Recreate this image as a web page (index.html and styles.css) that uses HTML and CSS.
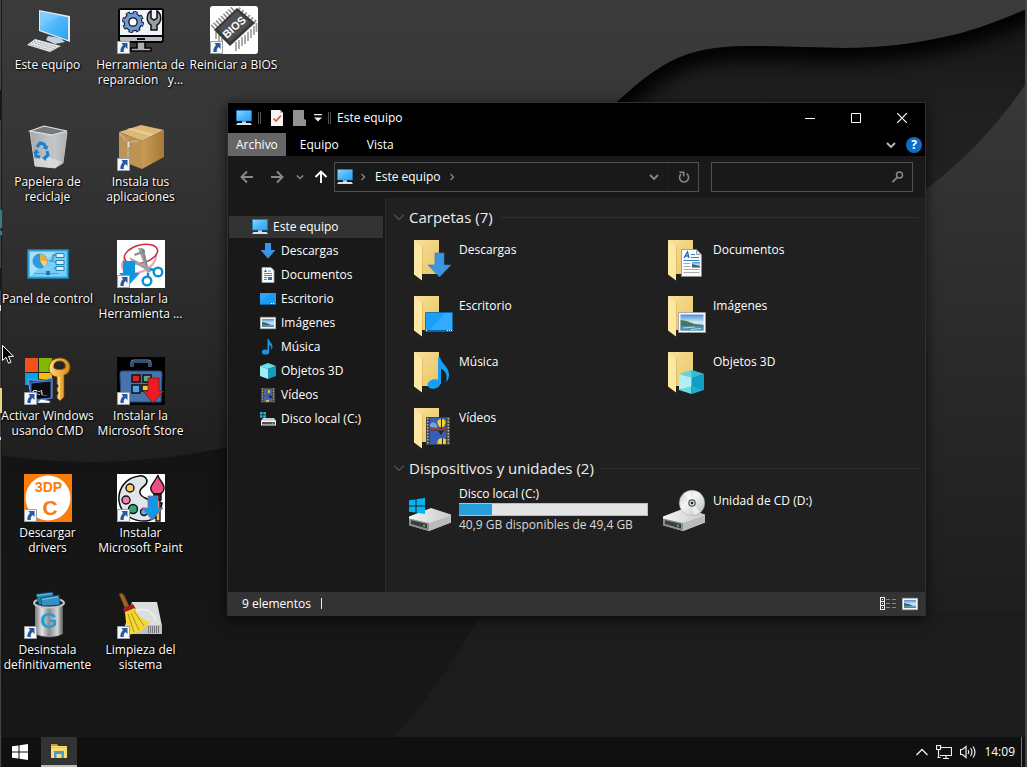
FILE: index.html
```html
<!DOCTYPE html>
<html lang="es">
<head>
<meta charset="utf-8">
<title>Escritorio</title>
<link rel="stylesheet" href="styles.css">
</head>
<body>
<svg class="sprite" aria-hidden="true">
  <defs>
    <linearGradient id="g-screen" x1="0" y1="0" x2="1" y2="1"><stop offset="0" stop-color="#8fd6ff"/><stop offset=".5" stop-color="#4db8fb"/><stop offset="1" stop-color="#2ba2f2"/></linearGradient>
    <linearGradient id="g-folder" x1="0" y1="0" x2="1" y2="1"><stop offset="0" stop-color="#f9e19a"/><stop offset="1" stop-color="#e8c464"/></linearGradient>
    <linearGradient id="g-flap" x1="0" y1="0" x2="0" y2="1"><stop offset="0" stop-color="#fbe6a6"/><stop offset="1" stop-color="#ffe9a0"/></linearGradient>
    <linearGradient id="g-bin" x1="0" x2="1"><stop offset="0" stop-color="#a4a7aa"/><stop offset=".55" stop-color="#c3c6c8"/><stop offset="1" stop-color="#85888b"/></linearGradient>
    <linearGradient id="g-metal" x1="0" x2="1"><stop offset="0" stop-color="#77797b"/><stop offset=".25" stop-color="#e2e3e4"/><stop offset=".5" stop-color="#8a8d90"/><stop offset=".8" stop-color="#d5d6d8"/><stop offset="1" stop-color="#55585a"/></linearGradient>
    <linearGradient id="g-key" x1="0" x2="1"><stop offset="0" stop-color="#ffd97a"/><stop offset="1" stop-color="#d98a12"/></linearGradient>
    <linearGradient id="g-box" x1="0" x2="1"><stop offset="0" stop-color="#c89c58"/><stop offset="1" stop-color="#a87834"/></linearGradient>
    <linearGradient id="g-sky" x1="0" y1="0" x2="0" y2="1"><stop offset="0" stop-color="#4b8fdd"/><stop offset=".5" stop-color="#d5e9f5"/><stop offset="1" stop-color="#6aa0bd"/></linearGradient>
    <linearGradient id="g-drive" x1="0" x2="1"><stop offset="0" stop-color="#f4f4f4"/><stop offset="1" stop-color="#c9cacc"/></linearGradient>
    <linearGradient id="g-disc" x1="0" y1="0" x2="1" y2="1"><stop offset="0" stop-color="#c9cccd"/><stop offset=".4" stop-color="#f4f6f6"/><stop offset=".6" stop-color="#dfe3e4"/><stop offset="1" stop-color="#b4b8ba"/></linearGradient>
  </defs>
  <symbol id="shortcut" viewBox="0 0 13 13"><path fill="#f4f6f8" stroke="#9aa0a6" d="M.5.5h12v12H.5z"/><path fill="#28599c" d="M4.500 2h6v6L8.500 6C7 7.300 6.500 9 6.800 11H3.500C3 8.500 4 6.300 6 4z"/></symbol>
  <symbol id="pc" viewBox="0 0 16 16"><path fill="url(#g-screen)" stroke="#1583cf" stroke-width=".6" d="M.5.5h15v10.500H.5z"/><path fill="#b9d5e7" d="M6 11.300h4v1.700H6z"/><path fill="#d6e2ea" d="M1.500 13h13l1.500 2H0z"/></symbol>
  <symbol id="chev" viewBox="0 0 10 10"><path fill="none" stroke="currentColor" stroke-width="1.800" d="M1 3l4 4 4-4"/></symbol>
  <symbol id="chev-thin" viewBox="0 0 10 10"><path fill="none" stroke="currentColor" d="M0 2.500l5 5 5-5"/></symbol>
  <symbol id="chev-r" viewBox="0 0 8 8"><path fill="none" stroke="currentColor" stroke-width="1.300" d="M2.500 1l3 3-3 3"/></symbol>
  <symbol id="arrow" viewBox="0 0 14 14"><path fill="none" stroke="currentColor" stroke-width="1.900" d="M13 7H2M7 1.500L1.500 7 7 12.500"/></symbol>
  <symbol id="down" viewBox="0 0 16 16"><path fill="#3a95e6" d="M5 0h6v7h4.500L8 15.500.5 7H5z"/></symbol>
  <symbol id="doc" viewBox="0 0 16 16"><path fill="#fdfdfd" stroke="#a9a9a9" stroke-width=".8" d="M2 .5h9l3 3v12H2z"/><path stroke="#3f84c4" d="M4 6.500h8M8 4h3M4 8.500h8M4 10.500h3M4 12.500h3"/><path fill="#1f73bb" d="M4 5l1.500-3L7 5zM8 10h4v3H8z"/></symbol>
  <symbol id="desk" viewBox="0 0 16 16"><path fill="#1a9bf6" d="M0 2h16v12H0z"/><path fill="#3cb0ff" d="M0 11L12 2H0z" opacity=".5"/><path stroke="#0b62ad" d="M0 13.500h16"/><path stroke="#fff" stroke-dasharray="1 1" d="M11 12.500h4"/></symbol>
  <symbol id="pic" viewBox="0 0 16 16"><path fill="#f5f5f5" stroke="#bbb" stroke-width=".6" d="M.3 2.300h15.400v11.400H.3z"/><path fill="url(#g-sky)" d="M2 4h12v8H2z"/><path fill="#3b6a68" d="M2 7l5 1 4 2-9 .5z"/><path fill="#4f88ae" d="M2 10.500h12V12H2z"/></symbol>
  <symbol id="note" viewBox="0 0 16 16"><ellipse cx="5.500" cy="13" rx="3.700" ry="2.600" fill="#1595ee"/><path fill="#1595ee" d="M7.500 0h1.300c.3 3 3.700 3.800 3.700 7.500 0 1.400-.4 2.600-1.300 3.800.8-3.300-.3-4.600-2-5.300V13H7.500z"/></symbol>
  <symbol id="cube" viewBox="0 0 16 16"><path fill="#6be0e8" d="M8 0l8 3-8 3-8-3z"/><path fill="#9deef2" d="M0 3l8 3v10l-8-3z"/><path fill="#129dbd" d="M16 3L8 6v10l8-3z"/></symbol>
  <symbol id="film" viewBox="0 0 16 16"><path fill="#4c4c4c" d="M1 1h14v14.500H1z"/><path stroke="#c9c9c9" stroke-dasharray="1 1.500" d="M2.500 1.500v13M13.500 1.500v13"/><path fill="#3f66b4" d="M4 2h8v6H4zM4 9h8v6H4z"/><path fill="#a04c50" d="M4 6h4v2H4z"/><path fill="#d8bd3a" d="M8 3h2v3H8zM6 13h3v2H6z"/><path fill="#1f2b44" d="M9 9h3v2H9z"/></symbol>
  <symbol id="winlogo" viewBox="0 0 16 16"><path fill="currentColor" d="M0 2.300l6.500-.9v6.100H0zM7.500 1.200L16 0v7.500H7.500zM0 8.500h6.500v6.100L0 13.700zM7.500 8.500H16V16l-8.500-1.200z"/></symbol>
  <symbol id="drive-s" viewBox="0 0 16 16"><path fill="#25b4ea" d="M0 1h2.500v2.500H0zM3.300 1H6v2.500H3.300zM0 4.300h2.500v2.500H0zM3.300 4.300H6v2.500H3.300z"/><path fill="#ccc" d="M3 7h11l2 3H1z"/><path fill="#f1f1f1" d="M1 9.500h15v5H1z"/><path fill="#515151" d="M2 11h13v2.500H2z"/><path fill="#47cf4e" d="M12 11.700h1.500v1H12z"/></symbol>
  <symbol id="folder" viewBox="0 0 48 48"><path fill="url(#g-folder)" d="M7 4h25v34H7z"/><path fill="url(#g-flap)" d="M7 4l8 6.500V44.500L7 38.500z"/><path fill="#d9b65c" d="M15 10.500h.7V38H15z"/></symbol>
  <symbol id="drive" viewBox="0 0 48 48"><path fill="url(#g-drive)" d="M3 26.500L25 18l20 6.500v8L23 41 3 35z"/><path fill="#8b8d8f" d="M3 28.500l20 4.500v8L3 35.500z"/><path fill="#3b3d3f" d="M5 30.300l16 3.700v4.500L5 34z"/><path fill="#b9bbbd" d="M23 33l22-7.500v7L23 41z"/><path fill="#37d243" d="M17 34.500l2 .5v1.800l-2-.5z"/></symbol>
</svg>

<main class="desktop">
  <svg class="wallpaper" viewBox="0 0 1027 767" preserveAspectRatio="none" aria-hidden="true">
    <defs>
      <linearGradient id="w-base" x1="0" y1="0" x2="0" y2="1"><stop offset="0" stop-color="#3b3b3b"/><stop offset=".2" stop-color="#353535"/><stop offset=".45" stop-color="#282828"/><stop offset=".6" stop-color="#1f1f1f"/></linearGradient>
      <linearGradient id="w-low" x1="0" y1="0" x2="0" y2="1"><stop offset="0" stop-color="#111"/><stop offset=".4" stop-color="#151515"/><stop offset="1" stop-color="#181818"/></linearGradient>
      <linearGradient id="w-right" x1="0" y1="0" x2="0" y2="1"><stop offset="0" stop-color="#141414"/><stop offset=".15" stop-color="#202020"/><stop offset=".5" stop-color="#222"/><stop offset="1" stop-color="#1b1b1b"/></linearGradient>
      <linearGradient id="w-fold" x1="0" y1="0" x2="0" y2="1"><stop offset="0" stop-color="#383838"/><stop offset=".45" stop-color="#282828"/><stop offset=".8" stop-color="#1d1d1d"/></linearGradient>
      <filter id="w-blur"><feGaussianBlur stdDeviation="9"/></filter>
      <clipPath id="w-clip"><path d="M600 118C650 70 675 51 725 47s120 6 180-3S985 26 1027 9v758H560z"/></clipPath>
    </defs>
    <path fill="url(#w-base)" d="M0 0h1027v767H0z"/>
    <path fill="url(#w-low)" d="M0 455Q110 472 228 447L500 330l200 437H0z"/>
    <g clip-path="url(#w-clip)">
      <path fill="url(#w-right)" d="M500 0h527v767H500z"/>
      <path fill="none" stroke="#060606" stroke-width="26" filter="url(#w-blur)" d="M600 118C650 70 675 51 725 47s120 6 180-3S985 26 1040 4"/>
      <path fill="url(#w-fold)" d="M1027 82Q985 145 925 190L700 500v267h327z"/>
    </g>
    <path fill="#1c1c1c" d="M482 612Q440 690 368 767h659V612z"/>
    <path fill="#444" d="M0 0h1v767H0zM1025 0h2v767h-2z"/>
    <path fill="#181818" d="M1 0h1v767H1zM0 90h1v30H0zM0 268h1v22H0z"/>
    <path fill="#347d8b" d="M0 210h2v18H0zM0 231h2v4H0z"/>
    <path fill="#ddd" d="M0 305h1v6H0zM0 437h1v3H0z"/>
    <path fill="#ecd37d" d="M0 388h2v25H0z"/>
  </svg>

  <nav class="shortcuts" aria-label="Iconos del escritorio">
    <button class="shortcut"><svg class="shortcut-icon" viewBox="0 0 48 48"><path fill="#e2eaf0" d="M15 4l31 6v26L15 25z"/><path fill="url(#g-screen)" d="M16 5.500l28 5.700V34L16 24z"/><path fill="#7fcbff" opacity=".5" d="M16 5.500l20 4L16 20z"/><path fill="#c0d5e0" d="M24 30l12 2 5 4-10 2-9-4z"/><path fill="#e6e9eb" d="M11 33l26 7-11 6-23-7z"/><path stroke="#8f989e" stroke-width=".8" stroke-dasharray="2 1" d="M10 35l24 6.500M8 36.500L31 43M5.500 38.500L28 44.500"/></svg><span class="shortcut-label">Este equipo</span></button>
    <button class="shortcut"><svg class="shortcut-icon" viewBox="0 0 48 48"><path fill="#babcc1" stroke="#050505" stroke-width="2" d="M4 3h40q2 0 2 2v29q0 2-2 2H4q-2 0-2-2V5q0-2 2-2z"/><path fill="#f0f3fc" d="M3 4h42v25H3z"/><path stroke="#050505" stroke-width="2" d="M2 30h44"/><path stroke="#111" stroke-width="2" d="M20 33h8"/><circle cx="16" cy="16" r="9" fill="none" stroke="#111" stroke-width="4" stroke-dasharray="4 3.070"/><circle cx="16" cy="16" r="6.500" fill="#fff" stroke="#111" stroke-width="6"/><circle cx="16" cy="16" r="9" fill="none" stroke="#6f98d6" stroke-width="2.400" stroke-dasharray="2.600 4.470" stroke-dashoffset="-.7"/><circle cx="16" cy="16" r="6.600" fill="none" stroke="#6f98d6" stroke-width="3.600"/><path fill="#9a9ca0" stroke="#111" stroke-width="1.500" d="M34 5v7l3 2 3-2V5c5 3 5 11 0 14v5h-6v-5c-5-3-5-11 0-14z"/><path fill="#aeb0b4" stroke="#050505" stroke-width="1.600" d="M20 36h8v6h6v3H14v-3h6z"/><use href="#shortcut" y="35" width="13" height="13"/></svg><span class="shortcut-label">Herramienta de<br>reparacion&nbsp;&nbsp; y...</span></button>
    <button class="shortcut"><svg class="shortcut-icon" viewBox="0 0 48 48"><rect width="48" height="48" rx="3" fill="#fefefe"/><path stroke="#888" stroke-width="7" stroke-dasharray="1.500 1.800" d="M3 22L24 3"/><path stroke="#999" stroke-width="5" stroke-dasharray="2 2" d="M28 3l18 14"/><path stroke="#a5a5a5" stroke-width="1.800" d="M26 36v9M29 34v9M32 31v9M35 29v9M38 26v9M41 23v9M44 20v9M46.500 17v9M6 26v7M9 29v7M12 32v7"/><path fill="#39393b" d="M4 24L27 2l18 15-25 23z"/><path fill="#505052" d="M8 23L27 5l14 12-21 19z"/><text x="24" y="25" class="bios" transform="rotate(-42 24 21)">BIOS</text><use href="#shortcut" y="35" width="13" height="13"/></svg><span class="shortcut-label">Reiniciar a BIOS</span></button>
    <button class="shortcut"><svg class="shortcut-icon" viewBox="0 0 48 48"><path fill="url(#g-bin)" stroke="#d9dadb" stroke-width=".8" d="M6 8l5 35 20 2 8-5 4-31-16 3z"/><path fill="#77797b" stroke="#e3e4e5" stroke-width="1.200" d="M6 8l14-5 23 5-15 4z"/><path fill="#d0d2d3" opacity=".55" d="M28 12l15-3-5 31-8 5z"/><path fill="#e6e7e8" opacity=".6" d="M10 36l14-2 14 5-7 6-20-2z"/><g fill="none" stroke="#1a7fce" stroke-width="3"><path d="M13 24l3-4 4 1 1.500 3M23 28l1 4-3 3M16 34l-4-1-.5-4"/></g><path fill="#1a7fce" d="M18.500 25l6-2.500-1.500 4.500zM22 32v6l-4-3zM9 30l3.500-4 3 4z"/></svg><span class="shortcut-label">Papelera de<br>reciclaje</span></button>
    <button class="shortcut"><svg class="shortcut-icon" viewBox="0 0 48 48"><path fill="#dbb878" d="M2 9l22-7 23 5-22 11z"/><path fill="#be9455" d="M2 9l23 9v28L2 37z"/><path fill="url(#g-box)" d="M25 18L47 7v27L25 46z"/><path fill="#ecd29c" opacity=".8" d="M10 6l3-1 24 6-4 2z"/><path fill="none" stroke="#d8cbb0" stroke-width="1.500" stroke-dasharray="1 1" d="M3 11l8 8 10-1M11 19v23"/><path fill="#ddd" stroke="#777" stroke-width=".6" d="M10 18h3v7h-3z"/><use href="#shortcut" y="35" width="13" height="13"/></svg><span class="shortcut-label">Instala tus<br>aplicaciones</span></button>
    <button class="shortcut"><svg class="shortcut-icon" viewBox="0 0 48 48"><path fill="#5bc3f3" stroke="#1d8dcb" stroke-width="1.500" d="M4 10h40v28H4z"/><path fill="#a4e0fb" d="M6 12h36v24H6z"/><path fill="#64c6f5" d="M7 36l24-24h11v24z" opacity=".7"/><circle cx="16" cy="21" r="7" fill="#cdeefc" stroke="#2c8cc5"/><path fill="#2c99dc" d="M16 21l7 0a7 7 0 1 1-7-7z"/><path fill="#ebac41" d="M16 21v-7a7 7 0 0 1 7 7z"/><path fill="#f5cf82" d="M16 21h7a7 7 0 0 1-3 6z"/><g fill="#d8f1fc" stroke="#267fb5"><path d="M32 13.500h8v4h-8zM32 20.500h8v4h-8zM32 26.500h8v4h-8z"/><path fill="none" d="M25 21h4v-6h3M32 22h-2M32 28h-2"/></g><path stroke="#d27c20" d="M10 33.500h24"/><path fill="#1975b5" d="M22 31h4v4h-4z"/></svg><span class="shortcut-label">Panel de control</span></button>
    <button class="shortcut"><svg class="shortcut-icon" viewBox="0 0 48 48"><path fill="#fff" d="M0 0h48v48H0z"/><ellipse cx="22" cy="21" rx="18" ry="11" fill="none" stroke="#e7a5ac" stroke-width="2" transform="rotate(-25 22 21)"/><ellipse cx="24" cy="14" rx="17" ry="9" fill="#fff" stroke="#cf2e42" stroke-width="1.600" transform="rotate(-15 24 14)"/><path fill="#a0a3a6" d="M21 8l4 0 6 20 3 4-4 1zM12 17l24 12-3 3-18-10z"/><path fill="#85898c" d="M24 8l3 1 4 18-2-1zM17 14l11-4v2l-10 4z"/><g fill="none" stroke="#0d8fd5" stroke-width="2.400"><circle cx="41" cy="32" r="4.300"/><circle cx="30" cy="41" r="4.300"/><path d="M33 29l4 1M31 33v3"/></g><path fill="#1096df" d="M6 21h12v12h5L13 44 2 33h4z"/><use href="#shortcut" y="35" width="13" height="13"/></svg><span class="shortcut-label">Instalar la<br>Herramienta ...</span></button>
    <button class="shortcut"><svg class="shortcut-icon" viewBox="0 0 48 48"><path fill="#f1511b" d="M1 1h13v14H1z"/><path fill="#7fba00" d="M15 1h13v14H15z"/><path fill="#00a3ee" d="M1 16h13v12H1z"/><path fill="#fbbc09" d="M15 16h13v6H15z"/><path fill="#2757a4" stroke="#7ea6de" d="M4 22q12 3 24-1v20L8 45z"/><path fill="#0a0c10" stroke="#4675c6" d="M7 26l20-2v17L7 43z"/><path fill="#fff" stroke="#244c84" stroke-width=".5" d="M17 42l9 2v2H13z"/><text x="8" y="38" class="cmd">C:\_</text><g fill="url(#g-key)" stroke="#7c4a08" stroke-width=".8"><path fill-rule="evenodd" d="M36 1c6 0 10 4 10 9 0 4-2 7-6 8v22l-4 4-3-3v-3l2-2-2-2v-3l2-2-2-2v-7c-5-1-8-4-8-9 0-6 5-10 11-10zm0 3c-5 0-7 3-6 7 3 2 8 2 11 0 1-4-1-7-5-7z"/></g><path stroke="#fff0b5" d="M35 20v22"/><use href="#shortcut" y="35" width="13" height="13"/></svg><span class="shortcut-label">Activar Windows<br>usando CMD</span></button>
    <button class="shortcut"><svg class="shortcut-icon" viewBox="0 0 48 48"><path d="M0 0h48v48H0z"/><path fill="#4772aa" stroke="#274a77" d="M5 14h38q2 0 2 2v3l-1 26H4L3 19v-3q0-2 2-2z"/><path fill="none" stroke="#5f9ad0" stroke-width="3" d="M15 10V6q0-2 2-2h14q2 0 2 2v4"/><path fill="none" stroke="#111" d="M15 10V6q0-2 2-2h14q2 0 2 2v4"/><g stroke="#111" stroke-width="1.500"><path fill="#e31c25" d="M15 18h8v7h-8z"/><path fill="#58ad83" d="M26 18h8v7h-8z"/><path fill="#4aa6ed" d="M15 28h8v8h-8z"/><path fill="#f0c536" d="M25 28h8v6h-8z"/></g><path fill="#ed1c24" stroke="#1b1b1b" stroke-width=".5" d="M31 21h11v13h5L36 46 26 34h5z"/><use href="#shortcut" y="35" width="13" height="13"/></svg><span class="shortcut-label">Instalar la<br>Microsoft Store</span></button>
    <button class="shortcut"><svg class="shortcut-icon" viewBox="0 0 48 48"><path fill="#fa7d0c" d="M0 0h48v48H0z"/><circle cx="24" cy="24" r="22.500" fill="#fff"/><text x="24.500" y="18" class="tdp">3DP</text><text x="26" y="41" class="tdp-c">C</text><use href="#shortcut" y="35" width="13" height="13"/></svg><span class="shortcut-label">Descargar<br>drivers</span></button>
    <button class="shortcut"><svg class="shortcut-icon" viewBox="0 0 48 48"><path fill="#fff" d="M0 0h48v48H0z"/><path fill="#dfe6ea" stroke="#080808" stroke-width="1.500" d="M22 2C8 4 1 15 2 27c2 13 13 21 28 20 8-1 13-7 15-18H33c0-6-9-4-10-10-1-5 4-6 6-9 3-5-2-9-7-8z"/><g stroke="#111" stroke-width="1.400"><circle cx="13" cy="14" r="4" fill="#f8cc68"/><circle cx="9" cy="26" r="4" fill="#f283b4"/><circle cx="16" cy="35" r="4.500" fill="#35a477"/><circle cx="27" cy="38" r="3.500" fill="#6fa8dd"/><path fill="#ef4f88" d="M41 1c0 4 6 8 6 13 0 3-2 5-4 6h-6c-8-7 1-11 4-19z"/><path fill="#29293a" d="M37 20h7v6h-7z"/><path fill="#f0c26b" d="M39 26h4v21h-4z"/></g><path fill="#0b9ae6" stroke="#d75273" stroke-width=".8" d="M31 22h10v12h5L35 46 25 34h6z"/><use href="#shortcut" y="35" width="13" height="13"/></svg><span class="shortcut-label">Instalar<br>Microsoft Paint</span></button>
    <button class="shortcut"><svg class="shortcut-icon" viewBox="0 0 48 48"><ellipse cx="25" cy="42" rx="13" ry="5" fill="#333"/><path fill="url(#g-metal)" d="M11 13h28v30q-13 6-28 0z"/><ellipse cx="25" cy="12" rx="15" ry="4.500" fill="#222" stroke="#c5c6c8" stroke-width="2"/><path fill="#267fb3" stroke="#0a405d" stroke-width=".7" d="M12 3l17-2 1 11-15 2z"/><path fill="#3592c2" stroke="#0c4666" stroke-width=".7" d="M17 7l18-3 1 10-18 1z"/><path stroke="#7cc4e4" d="M18 8.500l16-2.500M13 4.500l15-2"/><text x="24.500" y="37" class="geek">G</text><use href="#shortcut" y="35" width="13" height="13"/></svg><span class="shortcut-label">Desinstala<br>definitivamente</span></button>
    <button class="shortcut"><svg class="shortcut-icon" viewBox="0 0 48 48"><path fill="#dcdddd" d="M15 11h25l5 24v8H8v-8z"/><path fill="#bfc1c2" d="M8 34h37v9H8z"/><path stroke="#777" stroke-width="7" stroke-dasharray="1 1" d="M31 38.500h12"/><path fill="none" stroke="#f2f2f2" stroke-width="1.500" d="M18 20q14-6 21 9"/><path fill="#9b6428" stroke="#5c3710" stroke-width=".7" d="M2 3q3-2 5 1l5 11-4 2z"/><path fill="#a4201f" d="M6 17l10-4 3 5-11 5z"/><path fill="#f3d834" d="M8 21l10-4q3 11 15 14l-4 5-3 2-3 3-5 1-6 2Q9 35 8 21z"/><path fill="none" stroke="#b48d17" d="M11 23l6 18M14 22l8 17M17 20l10 15"/><use href="#shortcut" y="35" width="13" height="13"/></svg><span class="shortcut-label">Limpieza del<br>sistema</span></button>
  </nav>

  <section class="window" aria-label="Este equipo">
    <header class="titlebar">
      <svg class="i16"><use href="#pc"/></svg>
      <span class="bar"></span>
      <button class="quick" aria-label="Propiedades"><svg class="i16" viewBox="0 0 16 16"><path fill="#f5f5f5" d="M2 0h9l3 3v13H2z"/><path fill="#bbb" d="M11 0l3 3h-3z"/><path fill="none" stroke="#e0532a" stroke-width="1.600" d="M4.500 8.500L7 11l5-5.500"/></svg></button>
      <button class="quick" aria-label="Nueva carpeta"><svg class="i16" viewBox="0 0 16 16"><path fill="#929292" d="M1 0h11v9l2 1v6H1z"/></svg></button>
      <button class="quick-more" aria-label="Personalizar"><svg class="i8" viewBox="0 0 8 8"><path fill="#eee" d="M0 0h8v1.200H0zM0 3.500h8L4 7.500z"/></svg></button>
      <span class="bar"></span>
      <h1 class="title">Este equipo</h1>
      <button class="caption" aria-label="Minimizar"><svg class="i10" viewBox="0 0 10 10"><path stroke="#fff" d="M0 5.500h10"/></svg></button>
      <button class="caption" aria-label="Maximizar"><svg class="i10" viewBox="0 0 10 10"><path fill="none" stroke="#fff" d="M.5.5h9v9h-9z"/></svg></button>
      <button class="caption" aria-label="Cerrar"><svg class="i10" viewBox="0 0 10 10"><path stroke="#fff" stroke-width="1.200" d="M0 0l10 10M10 0L0 10"/></svg></button>
    </header>
    <div class="tabs">
      <button class="tab tab-on">Archivo</button>
      <button class="tab">Equipo</button>
      <button class="tab">Vista</button>
      <button class="expand" aria-label="Expandir la cinta"><svg class="i10"><use href="#chev"/></svg></button>
      <button class="help" aria-label="Ayuda">?</button>
    </div>
    <div class="navbar">
      <div class="history">
        <button class="nav" aria-label="Atrás"><svg class="i14"><use href="#arrow"/></svg></button>
        <button class="nav" aria-label="Adelante"><svg class="i14 flip"><use href="#arrow"/></svg></button>
        <button class="nav nav-small" aria-label="Recientes"><svg class="i8"><use href="#chev"/></svg></button>
        <button class="nav nav-up" aria-label="Subir"><svg class="i14 up"><use href="#arrow"/></svg></button>
      </div>
      <div class="address">
        <svg class="i16"><use href="#pc"/></svg>
        <svg class="i8 crumb-sep"><use href="#chev-r"/></svg>
        <a class="crumb" href="#">Este equipo</a>
        <svg class="i8 crumb-sep"><use href="#chev-r"/></svg>
        <button class="drop" aria-label="Ubicaciones anteriores"><svg class="i10"><use href="#chev"/></svg></button>
        <button class="refresh" aria-label="Actualizar"><svg class="i14" viewBox="0 0 14 14"><path fill="none" stroke="currentColor" stroke-width="1.600" d="M9.500 3.700A4.500 4.500 0 1 1 4 4.200M2.500 2.300H6.700V6.500"/></svg></button>
      </div>
      <label class="search"><input class="search-input" type="text" aria-label="Buscar en Este equipo"><svg class="i12" viewBox="0 0 12 12"><circle cx="7.500" cy="4" r="3" fill="none" stroke="currentColor" stroke-width="1.500"/><path stroke="currentColor" stroke-width="1.800" d="M5.300 6.300L.5 11"/></svg></label>
    </div>
    <div class="content">
      <nav class="tree" aria-label="Panel de navegación">
        <a class="node node-on" href="#"><svg class="i16"><use href="#pc"/></svg>Este equipo</a>
        <a class="node" href="#"><svg class="i16"><use href="#down"/></svg>Descargas</a>
        <a class="node" href="#"><svg class="i16"><use href="#doc"/></svg>Documentos</a>
        <a class="node" href="#"><svg class="i16"><use href="#desk"/></svg>Escritorio</a>
        <a class="node" href="#"><svg class="i16"><use href="#pic"/></svg>Imágenes</a>
        <a class="node" href="#"><svg class="i16"><use href="#note"/></svg>Música</a>
        <a class="node" href="#"><svg class="i16"><use href="#cube"/></svg>Objetos 3D</a>
        <a class="node" href="#"><svg class="i16"><use href="#film"/></svg>Vídeos</a>
        <a class="node" href="#"><svg class="i16"><use href="#drive-s"/></svg>Disco local (C:)</a>
      </nav>
      <div class="files">
        <h2 class="group"><svg class="i10"><use href="#chev-thin"/></svg>Carpetas (7)</h2>
        <div class="tiles">
          <button class="tile"><svg class="i48" viewBox="-1 -1 48 48"><use href="#folder" width="48" height="48"/><path fill="#3c96e4" stroke="#2a75bd" stroke-width=".6" d="M28 17h9v12h7L32.500 41 21 29h7z"/></svg><span class="tile-name">Descargas</span></button>
          <button class="tile"><svg class="i48" viewBox="-1 -1 48 48"><use href="#folder" width="48" height="48"/><path fill="#fcfcfc" stroke="#8b8b8b" stroke-width=".8" d="M20.500 13.500h15l5 5v22h-20z"/><path fill="#ddd" stroke="#8b8b8b" stroke-width=".8" d="M35.500 13.500v5h5z"/><path fill="none" stroke="#1c70b8" stroke-width="1.300" d="M23 22l3.500-6 1.500 6M24 20h4"/><path stroke="#2e80c8" d="M30 18.500h4M30 21.500h8M22.500 24.500h16"/><path stroke="#aaa" d="M22.500 27.500h7M22.500 30.500h7M22.500 33.500h16M22.500 36.500h16"/><path fill="url(#g-sky)" d="M31 26h8v6h-8z"/><path fill="#37675a" d="M31 28l8 2v1h-8z"/></svg><span class="tile-name">Documentos</span></button>
          <button class="tile"><svg class="i48" viewBox="-1 -1 48 48"><use href="#folder" width="48" height="48"/><path fill="#18a0fb" stroke="#0b6ab2" stroke-width=".8" d="M18.500 20.500h27v19h-27z"/><path fill="#42b1fc" d="M38 21h7v17H23z" opacity=".65"/><path stroke="#0b63a8" d="M18.500 38.500h27"/><path stroke="#fff" stroke-dasharray="1 1" d="M19 38.500h1M40 38.500h5"/></svg><span class="tile-name">Escritorio</span></button>
          <button class="tile"><svg class="i48" viewBox="-1 -1 48 48"><use href="#folder" width="48" height="48"/><path fill="#fafafa" stroke="#999" stroke-width=".8" d="M17.500 20.500h27v20h-27z"/><path fill="url(#g-sky)" d="M19.500 22.500h23v16h-23z"/><path fill="#4a7a55" d="M19.500 28l6 1 8 3 9 1v1.500h-23z"/><path fill="#4d8fae" d="M19.500 34h23v4.500h-23z"/><path stroke="#b5dbe6" d="M22 36l12-1M30 37.500l10-1"/></svg><span class="tile-name">Imágenes</span></button>
          <button class="tile"><svg class="i48" viewBox="-1 -1 48 48"><use href="#folder" width="48" height="48"/><ellipse cx="27" cy="36" rx="6.500" ry="4.700" fill="#139ff5" transform="rotate(-15 27 36)"/><path fill="#139ff5" d="M31 9h2c1 7 9 9 9 18 0 3-1 5-3 7 2-7-1-12-5-13v15h-3z"/></svg><span class="tile-name">Música</span></button>
          <button class="tile"><svg class="i48" viewBox="-1 -1 48 48"><use href="#folder" width="48" height="48"/><path fill="#62d4e2" d="M30.500 22L43 26l-12.500 4L18 26z"/><path fill="#37bbd1" d="M30.500 22L43 26l-12.500 4z"/><path fill="#b1f0f2" d="M18 26l12.500 4v9L18 42z"/><path fill="#64dce4" d="M18 42l12.500-4v8z"/><path fill="#109ec4" d="M43 26l-12.500 4v9L43 42z"/><path fill="#1fafd0" d="M30.500 38L43 42l-12.500 4z"/></svg><span class="tile-name">Objetos 3D</span></button>
          <button class="tile"><svg class="i48" viewBox="-1 -1 48 48"><use href="#folder" width="48" height="48"/><path fill="#454545" d="M19 13h24v28H19z"/><path stroke="#bdbdbd" stroke-width="1.500" stroke-dasharray="1.500 1.500" d="M20.700 14v26M41.300 14v26"/><path fill="#355fb8" d="M23 14h16v12H23zM23 27h16v13H23z"/><path fill="#7ba3d8" d="M23 20q4-4 7 1v5h-7zM30 37l9-2v5h-9z"/><path fill="#8c3c58" d="M23 23l8 1 8-1v3H23z"/><path fill="#f2d332" d="M34.500 15c5 0 5 4 2 8h-4c-3-4-3-8 2-8zM35 34c5 0 4 4 3 6h-6c-1-2-2-6 3-6z"/><path fill="#27242c" d="M34 15h1v10h-1zM31 27h6l-3 4zM35 34h1v6h-1z"/></svg><span class="tile-name">Vídeos</span></button>
        </div>
        <h2 class="group"><svg class="i10"><use href="#chev-thin"/></svg>Dispositivos y unidades (2)</h2>
        <div class="tiles">
          <button class="tile tile-drive"><svg class="i48" viewBox="0 0 48 48"><use href="#drive" y="4" width="48" height="48"/><use href="#winlogo" class="cyan" x="3" y="12" width="16" height="16"/></svg><span class="drive-info"><span>Disco local (C:)</span><span class="usage"><span class="used" style="width:17.5%"></span></span><span class="free">40,9 GB disponibles de 49,4 GB</span></span></button>
          <button class="tile tile-drive"><svg class="i48" viewBox="0 0 48 48"><use href="#drive" y="4" width="48" height="48"/><circle cx="32" cy="17" r="12.700" fill="url(#g-disc)" stroke="#aaa" stroke-width=".5"/><path fill="#fff" opacity=".6" d="M32 17l-8-9 6-3zM32 17l8 9-6 3z"/><circle cx="32" cy="17" r="3.200" fill="#ddd" stroke="#555" stroke-width="1.200"/><circle cx="32" cy="17" r="1.300" fill="#222"/></svg><span class="tile-name">Unidad de CD (D:)</span></button>
        </div>
      </div>
    </div>
    <footer class="status">
      <span class="count">9 elementos</span>
      <button class="view" aria-label="Detalles"><svg class="i16" viewBox="0 0 16 16"><path fill="#eee" d="M0 1h5v13H0z"/><path fill="#333" d="M1 2h3v3H1zM1 6h3v3H1zM1 10h3v3H1z"/><path fill="#eee" d="M2 3h1v1H2zM2 7h1v1H2zM2 11h1v1H2z"/><path stroke="#888" stroke-dasharray="4 2" d="M6 3.500h10M6 7.500h10M6 11.500h10"/></svg></button>
      <button class="view" aria-label="Iconos grandes"><svg class="i16"><use href="#pic"/></svg></button>
    </footer>
  </section>

  <svg class="cursor" viewBox="0 0 12 19" aria-hidden="true"><path stroke="#fff" d="M.5.5v15l3.500-3.300 2.500 6 2.500-1-2.500-5.900h5z"/></svg>
</main>

<footer class="taskbar">
  <button class="task" aria-label="Inicio"><svg class="i16"><use href="#winlogo"/></svg></button>
  <button class="task task-on" aria-label="Explorador de archivos"><svg class="i16" viewBox="0 0 16 16"><path fill="#d89a1f" d="M0 1h6l1.500 2H0z"/><path fill="#fcdc74" d="M0 3h16v12H0z"/><path fill="#f0c64e" d="M0 4h16v1H0z"/><path fill="#4c9dd0" d="M3 8h10v7h-2.500v-4h-5v4H3z"/></svg></button>
  <div class="tray">
    <button class="tray-item" aria-label="Iconos ocultos"><svg class="i12" viewBox="0 0 12 12"><path fill="none" stroke="#eee" stroke-width="1.300" d="M.5 9L6 3.500 11.500 9"/></svg></button>
    <button class="tray-item" aria-label="Red"><svg class="i16" viewBox="0 0 16 16"><path fill="none" stroke="#eee" stroke-width="1.200" d="M5 3.500h10.500v8H4M.5 1.500h4v4h-4zM2.500 5.500v8M10 11.500v3M7 14.500h6M1.500 13.500h3"/></svg></button>
    <button class="tray-item" aria-label="Volumen"><svg class="i16" viewBox="0 0 16 16"><path fill="none" stroke="#eee" stroke-width="1.200" d="M.5 5.500h2l3.500-3v11l-3.500-3h-2zM8 6q1.500 2 0 4M10.500 4q3 4 0 8M13 2.500q4 5.500 0 11"/></svg></button>
    <time class="clock">14:09</time>
  </div>
</footer>
</body>
</html>
```

FILE: styles.css
```css
* { box-sizing: border-box; }

body {
  margin: 0;
  min-height: 100vh;
  display: flex;
  flex-direction: column;
  overflow: hidden;
  background: #1b1b1b;
  color: #fff;
  font: 12px/16px "Open Sans", "Noto Sans", sans-serif;
}

button {
  margin: 0;
  padding: 0;
  border: 0;
  background: none;
  color: inherit;
  font: inherit;
}

a { color: inherit; text-decoration: none; }
h1, h2 { margin: 0; font: inherit; }
svg { display: block; flex: none; }

.sprite { position: absolute; width: 0; height: 0; }
.i8 { width: 8px; height: 8px; }
.i10 { width: 10px; height: 10px; }
.i12 { width: 12px; height: 12px; }
.i14 { width: 14px; height: 14px; }
.i16 { width: 16px; height: 16px; }
.i48 { width: 48px; height: 48px; }
.flip { transform: rotate(180deg); }
.up { transform: rotate(90deg); }

/* Desktop */
.desktop { position: relative; flex: 1; }

.wallpaper {
  position: absolute;
  left: 0;
  top: 0;
  width: 100%;
  height: 100vh;
}

.shortcuts {
  position: relative;
  width: max-content;
  padding: 6px 0 0 1px;
  display: grid;
  grid-template-columns: repeat(3, 93px);
  grid-auto-rows: 117px;
}

.shortcut {
  display: flex;
  flex-direction: column;
  align-items: center;
  gap: 3px;
}

/* After the first row only two columns are filled */
.shortcut:nth-child(n + 4):nth-child(even) { grid-column: 1; }
.shortcut-icon { width: 48px; height: 48px; }

.shortcut-label {
  line-height: 15px;
  white-space: nowrap;
  text-shadow: 1px 1px 2px #000, 0 0 2px #000;
}

.bios, .cmd, .tdp, .tdp-c, .geek {
  font-family: "Liberation Sans", sans-serif;
  font-weight: bold;
  text-anchor: middle;
}

.bios { font-size: 11px; fill: #fff; }
.cmd { font-size: 8px; fill: #fff; text-anchor: start; }
.tdp { font-size: 14px; fill: #fa7d0c; }
.tdp-c { font-size: 21px; fill: #fa7d0c; }
.geek { font-size: 22px; fill: #259bd8; }

.cursor {
  position: absolute;
  left: 2px;
  top: 345px;
  width: 12px;
  height: 19px;
}

/* Explorer window */
.window {
  position: absolute;
  inset: 102px 101px 121px 227px;
  display: flex;
  flex-direction: column;
  border: 1px solid #303030;
  background: #191919;
  box-shadow: 0 3px 12px #000a;
}

.titlebar {
  flex: none;
  height: 30px;
  padding-left: 8px;
  display: flex;
  align-items: center;
  gap: 6px;
  background: #000;
}

.bar {
  width: 3px;
  height: 12px;
  border: 1px solid #555;
  border-width: 0 1px;
}

.quick { margin-left: 2px; }
.quick + .quick { margin-left: 1px; }
.title { flex: 1; }
.caption { width: 46px; height: 30px; display: grid; place-items: center; }
.caption + .caption { margin-left: -6px; }

.tabs {
  flex: none;
  height: 23px;
  display: flex;
  align-items: center;
  background: #000;
}

.tab { height: 23px; padding: 0 14px; }
.tab-on { padding: 0 8px; background: #666; }
.expand { margin-left: auto; padding: 6px; color: #bbb; }

.help {
  width: 16px;
  height: 16px;
  margin: 0 3px 0 4px;
  border-radius: 50%;
  background: #0f6dc8;
  font-weight: bold;
}

.navbar {
  flex: none;
  height: 42px;
  padding: 6px 12px;
  display: flex;
  gap: 12px;
  color: #888;
}

.history { display: flex; align-items: center; margin-right: -6px; }
.nav { margin-right: 16px; }
.nav + .nav { margin-right: 12px; }
.nav + .nav-small { margin-right: 10px; }
.nav + .nav-up { margin-right: 0; color: #fff; }

.address {
  flex: 1;
  display: flex;
  align-items: center;
  padding-left: 2px;
  border: 1px solid #505050;
}

.crumb-sep { margin: 0 6px; }
.crumb { margin: 0 1px 0 2px; color: #fff; }
.drop { margin-left: auto; padding: 9px; }
.refresh { padding: 7px 7px 7px 8px; border-left: 1px solid #1f1f1f; }

.search {
  width: 202px;
  display: flex;
  align-items: center;
  padding-right: 8px;
  border: 1px solid #505050;
}

.search-input {
  flex: 1;
  min-width: 0;
  border: 0;
  outline: 0;
  background: none;
  color: #fff;
  font: inherit;
}

.content { flex: 1; display: flex; min-height: 0; }

.tree {
  width: 158px;
  padding: 18px 2px 0 1px;
  border-right: 1px solid #2b2b2b;
  display: flex;
  flex-direction: column;
  gap: 2px;
}

.node {
  height: 22px;
  padding-left: 31px;
  display: flex;
  align-items: center;
  gap: 5px;
}

.node-on { padding-left: 23px; background: #333; }

.files {
  flex: 1;
  padding: 7px 7px 0 7px;
  border-left: 1px solid #222;
  background: #202020;
}

.group {
  height: 24px;
  display: flex;
  align-items: center;
  gap: 5px;
  font-size: 15px;
  color: #eee;
}

.group svg { color: #777; }
.group::after { content: ""; flex: 1; margin-left: 2px; border-top: 1px solid #2e2e2e; }

.tiles {
  padding: 3px 0 0 12px;
  display: grid;
  grid-template-columns: repeat(auto-fill, 254px);
  grid-auto-rows: 56px;
}

.tile {
  display: flex;
  align-items: flex-start;
  gap: 5px;
  padding-top: 3px;
  text-align: left;
}

.tile-name { padding-top: 7px; }
.tile .cyan { color: #00b7f1; }
.drive-info { flex: 1; display: flex; flex-direction: column; gap: 1px; margin-right: 12px; }
.usage { height: 13px; background: #e4e4e4; border: 1px solid #bcbcbc; border-left: 0; }
.used { display: block; height: 100%; background: #269fdb; }
.free { color: #d8d8d8; white-space: nowrap; }

.status {
  flex: none;
  height: 23px;
  padding: 0 7px 0 14px;
  display: flex;
  align-items: center;
  gap: 6px;
  background: #333;
}

.count {
  margin-right: auto;
  padding-right: 10px;
  border-right: 1px solid #eee;
  line-height: 11px;
}

/* Taskbar */
.taskbar {
  position: relative;
  height: 30px;
  margin: 0 2px;
  display: flex;
  background: #101010;
}

.task { width: 36px; display: grid; place-items: center; }
.task-on { margin-left: 3px; background: #333; border-bottom: 2px solid #bbb; }

.tray {
  margin: 0 3px 0 auto;
  padding-right: 6px;
  display: flex;
  align-items: center;
  gap: 8px;
  border-right: 1px solid #777;
}
```
